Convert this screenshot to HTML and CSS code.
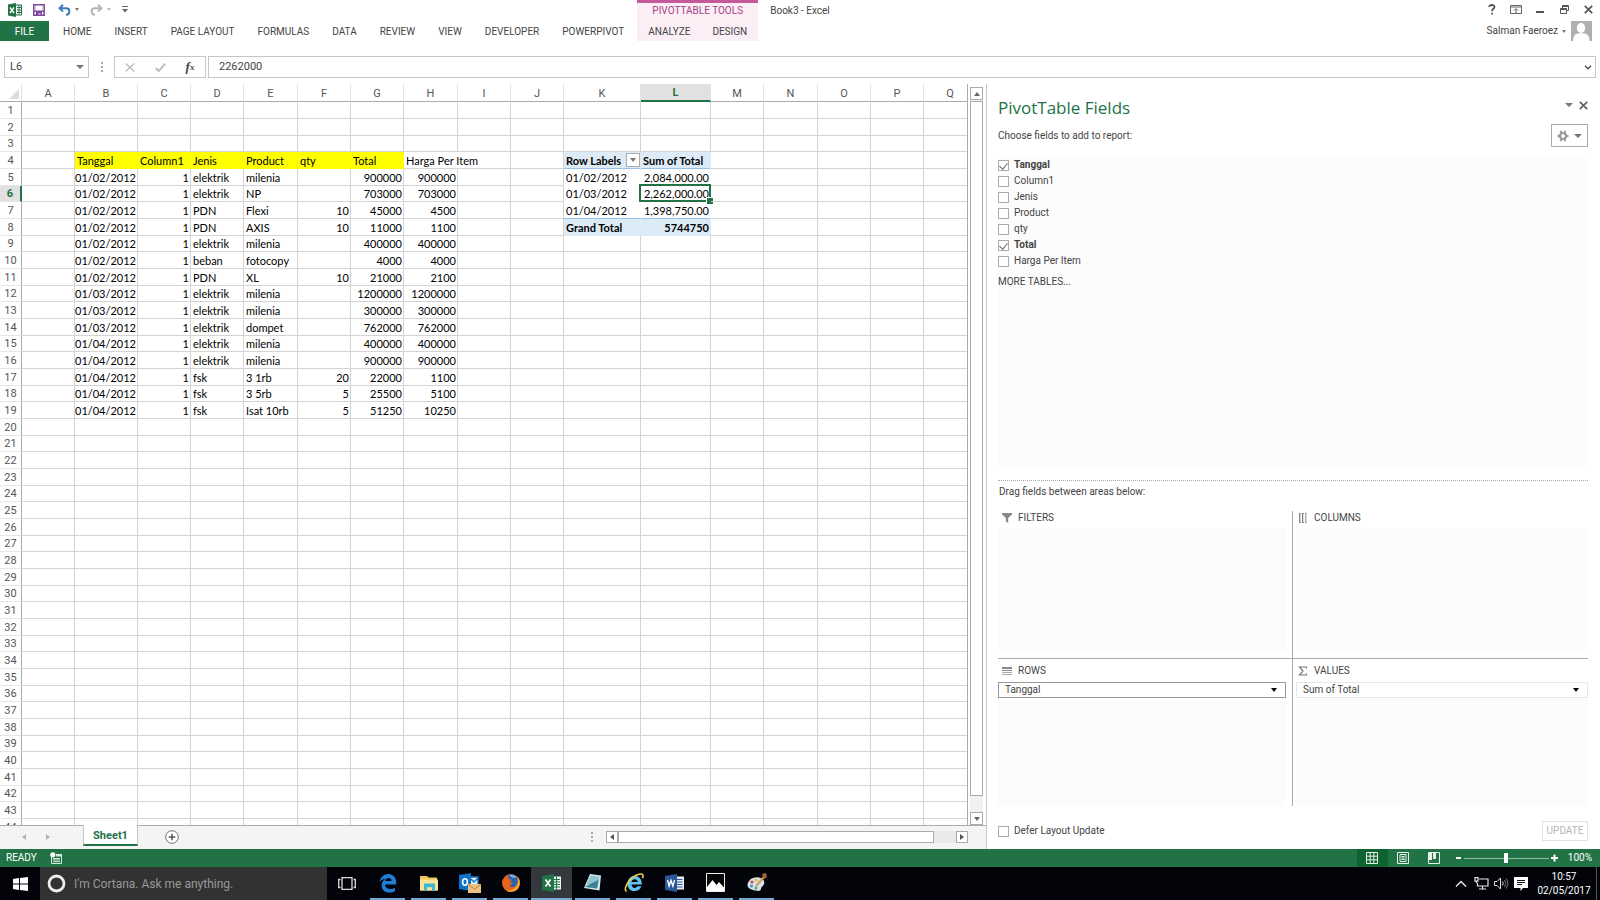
FILE: index.html
```html
<!DOCTYPE html>
<html lang="en">
<head>
<meta charset="utf-8">
<title>Book3 - Excel</title>
<link rel="stylesheet" href="styles.css">
</head>
<body>
<header class="ribbon">
  <div class="quick-access">
    <svg class="app-logo" width="14" height="14" viewBox="0 0 14 14"><path fill="#217346" d="M0 1.5 8 0v14L0 12.500z"/><path fill="none" stroke="#217346" d="M8 2h5.500v10H8M9 4.500h4M9 7h4M9 9.500h4M11 2v10"/><path stroke="#fff" stroke-width="1.400" d="m2 4.500 4 5.500M6 4.500l-4 5.500"/></svg>
    <button class="icon-btn save" aria-label="Save"><svg width="12" height="12" viewBox="0 0 12 12"><path fill="none" stroke="#80479c" stroke-width="1.500" d="M.8.8h10.400v10.400H.8z"/><path fill="#80479c" d="M1 6.500h10V8H1zM3 8h6v3.500H7.500V9.500h-2v2H3z"/><path fill="#80479c" opacity=".3" d="M2 1h1v5H2zM9 1h1v5H9z"/></svg></button>
    <button class="icon-btn" aria-label="Undo"><svg width="13" height="12" viewBox="0 0 13 12"><path fill="none" stroke="#3c78b4" stroke-width="1.900" d="M5 .8 1.500 4.200 5 7.600M1.500 4.200H8c4.500 0 4.500 6.300 0 6.600"/></svg></button>
    <button class="caret-btn" aria-label="Undo list"><i class="caret"></i></button>
    <button class="icon-btn" aria-label="Redo"><svg width="13" height="12" viewBox="0 0 13 12"><path fill="none" stroke="#b4b4b4" stroke-width="1.900" d="M8 .8l3.500 3.400L8 7.600M11.500 4.200H5c-4.500 0-4.500 6.300 0 6.600"/></svg></button>
    <button class="caret-btn" aria-label="Redo list"><i class="caret pale"></i></button>
    <button class="icon-btn" aria-label="Customize Quick Access Toolbar"><svg width="6" height="7" viewBox="0 0 6 7"><path fill="#666" d="M0 0h6v1H0zM0 3h6L3 6.500z"/></svg></button>
  </div>
  <nav class="tabs">
    <button class="file">FILE</button><button>HOME</button><button>INSERT</button><button>PAGE LAYOUT</button><button>FORMULAS</button><button>DATA</button><button>REVIEW</button><button>VIEW</button><button>DEVELOPER</button><button>POWERPIVOT</button>
  </nav>
  <div class="context-tabs">
    <span class="context-title">PIVOTTABLE TOOLS</span>
    <div class="context-row"><button>ANALYZE</button><button>DESIGN</button></div>
  </div>
  <h1 class="doc-title">Book3 - Excel</h1>
  <div class="window-controls">
    <button aria-label="Help"><svg width="8" height="11" viewBox="0 0 8 11"><path fill="none" stroke="#555" stroke-width="1.800" d="M1.200 3C1.200.3 6.500.3 6.500 3 6.500 4.800 4 4.800 4 7.200M4 8.700v1.800"/></svg></button>
    <button aria-label="Ribbon display options"><svg width="12" height="9" viewBox="0 0 12 9"><path fill="none" stroke="#666" d="M.5.5h11v8H.5zM.5 2h11M6 8V4M4 5.500l2-2 2 2"/></svg></button>
    <button aria-label="Minimize"><svg width="8" height="9" viewBox="0 0 8 9"><path fill="#555" d="M0 6h8v2H0z"/></svg></button>
    <button aria-label="Restore"><svg width="9" height="9" viewBox="0 0 9 9"><path fill="none" stroke="#555" d="M.5 3.500h6v5h-6zM.5 4.500h6M2.500 3V.5h6v5H7M2.500 1.500h6"/></svg></button>
    <button aria-label="Close"><svg width="9" height="9" viewBox="0 0 9 9"><path stroke="#555" stroke-width="1.700" d="m.8.8 7.400 7.400M8.200.8.800 8.200"/></svg></button>
  </div>
  <div class="account">
    <button>Salman Faeroez <i class="caret"></i></button>
    <svg width="21" height="20" viewBox="0 0 21 20"><path fill="#b0b0b0" d="M0 0h21v20H0z"/><ellipse cx="10" cy="7" rx="4.200" ry="5" fill="#fff"/><path fill="#fff" d="M2 20c0-5 2-7.500 6-7.800h4.500c4 .3 6 2.800 6 7.800z"/></svg>
  </div>
</header>

<section class="formula-bar">
  <div class="name-box"><input type="text" value="L6" aria-label="Name Box"><button class="caret-btn" aria-label="Name list"><i class="caret big"></i></button></div>
  <span class="grip"><i></i><i></i><i></i></span>
  <div class="formula-actions">
    <button aria-label="Cancel"><svg width="10" height="9" viewBox="0 0 10 9"><path stroke="#bdbdbd" stroke-width="1.400" d="m.7.5 8.600 8M9.300.5.7 8.500"/></svg></button>
    <button aria-label="Enter"><svg width="11" height="9" viewBox="0 0 11 9"><path fill="none" stroke="#bdbdbd" stroke-width="1.900" d="m.7 5 3 3L10.300.700"/></svg></button>
    <button class="fx" aria-label="Insert Function">f<small>x</small></button>
  </div>
  <div class="formula-box"><input type="text" value="2262000" aria-label="Formula"><button aria-label="Expand formula bar"><svg width="8" height="5" viewBox="0 0 8 5"><path fill="none" stroke="#555" stroke-width="1.600" d="M1 .7l3 3 3-3"/></svg></button></div>
</section>

<main class="workspace">
  <section class="book">
    <div class="grid-row">
      <div class="sheet"><table id="grid"></table></div>
      <div class="vscroll">
        <button aria-label="Scroll up"><i class="arrow up"></i></button>
        <div class="vtrack"><div class="vthumb"></div></div>
        <button aria-label="Scroll down"><i class="arrow down"></i></button>
      </div>
    </div>
    <div class="sheet-bar">
      <button class="nav" aria-label="Previous sheet"><i class="arrow left"></i></button>
      <button class="nav" aria-label="Next sheet"><i class="arrow right"></i></button>
      <button class="sheet-tab">Sheet1</button>
      <button class="add" aria-label="New sheet"><svg width="14" height="14" viewBox="0 0 14 14"><circle cx="7" cy="7" r="6.300" fill="#fff" stroke="#6e6e6e"/><path stroke="#555" stroke-width="1.500" d="M7 3.700v6.600M3.700 7h6.600"/></svg></button>
      <span class="grip push"><i></i><i></i><i></i></span>
      <div class="hscroll">
        <button aria-label="Scroll left"><i class="arrow left"></i></button>
        <div class="htrack"><div class="hthumb"></div></div>
        <button aria-label="Scroll right"><i class="arrow right"></i></button>
      </div>
    </div>
  </section>

  <aside class="pane">
    <div class="pane-head">
      <h2>PivotTable Fields</h2>
      <button aria-label="Pane options"><i class="caret big"></i></button>
      <button aria-label="Close pane"><svg width="9" height="9" viewBox="0 0 9 9"><path stroke="#666" stroke-width="1.800" d="m.8.8 7.400 7.400M8.200.8.800 8.200"/></svg></button>
    </div>
    <div class="pane-sub">
      <span>Choose fields to add to report:</span>
      <button class="tools" aria-label="Tools"><svg width="12" height="12" viewBox="0 0 12 12"><circle cx="6" cy="6" r="3" fill="none" stroke="#999" stroke-width="2.200"/><path stroke="#999" stroke-width="2" d="M3.800.7l.6 2M8.200.7l-.6 2M3.800 11.300l.6-2M8.200 11.300l-.6-2M.5 6h2M9.500 6h2"/></svg><i class="caret big"></i></button>
    </div>
    <div class="fields">
      <label class="on"><input type="checkbox" checked>Tanggal</label>
      <label><input type="checkbox">Column1</label>
      <label><input type="checkbox">Jenis</label>
      <label><input type="checkbox">Product</label>
      <label><input type="checkbox">qty</label>
      <label class="on"><input type="checkbox" checked>Total</label>
      <label><input type="checkbox">Harga Per Item</label>
      <a href="#more">MORE TABLES...</a>
    </div>
    <p class="drag-hint">Drag fields between areas below:</p>
    <div class="areas">
      <section>
        <h3><svg width="10" height="10" viewBox="0 0 10 10"><path fill="#888" d="M0 0h10v1.500L6.200 5v5L3.800 8.500V5L0 1.500z"/></svg>FILTERS</h3>
        <div class="drop"></div>
      </section>
      <section>
        <h3><svg width="10" height="10" viewBox="0 0 10 10"><path fill="#888" d="M1 0h2v10H1zM4 0h2v10H4z"/><path fill="#aaa" d="M7 0h2v10H7z"/><path fill="#ddd" d="M2 1h1v8H2zM5 1h1v8H5zM8 1h1v8H8z"/></svg>COLUMNS</h3>
        <div class="drop"></div>
      </section>
      <section>
        <h3><svg width="10" height="10" viewBox="0 0 10 10"><path fill="#888" d="M0 1h10v2H0zM0 4h10v1H0z"/><path fill="#aaa" d="M0 6h10v1H0zM0 8h10v1H0z"/></svg>ROWS</h3>
        <div class="drop"><button class="pill strong">Tanggal<i class="caret black"></i></button></div>
      </section>
      <section>
        <h3><svg width="10" height="10" viewBox="0 0 10 10"><path fill="none" stroke="#777" stroke-width="1.200" d="M8.500 2.500V1h-7L5 5 1.500 9h7V7.500"/></svg>VALUES</h3>
        <div class="drop"><button class="pill">Sum of Total<i class="caret black"></i></button></div>
      </section>
    </div>
    <div class="pane-foot">
      <label><input type="checkbox">Defer Layout Update</label>
      <button disabled>UPDATE</button>
    </div>
  </aside>
</main>

<footer class="status">
  <span>READY</span>
  <button class="macro" aria-label="Record macro"><svg width="12" height="12" viewBox="0 0 12 12"><path fill="none" stroke="#d5e8dc" d="M1.500 5v6.500h10v-9H6M3 6.500h7M3 8h7M3 9.700h7"/><circle cx="2.800" cy="2.800" r="2.600" fill="#fff"/><path fill="#d5e8dc" d="M6 2h6v2.500H6z"/></svg></button>
  <button class="view on" aria-label="Normal view"><svg width="12" height="12" viewBox="0 0 12 12"><path fill="none" stroke="#e6f1ea" d="M.5.5h11v11H.5zM4.200.5v11M7.800.5v11M.5 4.200h11M.5 7.800h11"/></svg></button>
  <button class="view" aria-label="Page layout view"><svg width="12" height="12" viewBox="0 0 12 12"><path fill="none" stroke="#e6f1ea" d="M.5.5h11v11H.5zM3 2.500h6v7H3zM4.500 4.500h3M4.500 6h3M4.500 7.500h3"/></svg></button>
  <button class="view" aria-label="Page break view"><svg width="12" height="12" viewBox="0 0 12 12"><path fill="none" stroke="#e6f1ea" d="M.5.5h11v11H.5z"/><path fill="#e6f1ea" d="M1 1h3v7H1zM5 1h3v6H5z"/></svg></button>
  <button class="zoom-step" aria-label="Zoom out"><svg width="7" height="8" viewBox="0 0 7 8"><path fill="#fff" d="M1 3h5v2H1z"/></svg></button>
  <input class="zoom" type="range" min="0" max="100" value="50" aria-label="Zoom">
  <button class="zoom-step" aria-label="Zoom in"><svg width="7" height="8" viewBox="0 0 7 8"><path fill="#fff" d="M0 3h7v2H0zM2.500.5h2v7h-2z"/></svg></button>
  <span class="zoom-value">100%</span>
</footer>

<footer class="taskbar">
  <button class="start" aria-label="Start"><svg width="15" height="14" viewBox="0 0 15 14"><path fill="#fff" d="M0 2l6-.9v5.500H0zM7 1l8-1v6.600H7zM0 7.500h6V13l-6-.9zM7 7.500h8V14l-8-1z"/></svg></button>
  <label class="cortana"><svg width="19" height="19" viewBox="0 0 19 19"><circle cx="9.500" cy="9.500" r="7.500" fill="none" stroke="#eee" stroke-width="2.800"/></svg><input type="text" placeholder="I'm Cortana. Ask me anything." aria-label="Search"></label>
  <button class="task-view" aria-label="Task view"><svg width="18" height="13" viewBox="0 0 18 13"><path fill="none" stroke="#ddd" stroke-width="1.300" d="M4 .7h10v11.600H4zM2.500 2.500H.7v8h1.800M15.500 2.500h1.800v8h-1.800"/></svg></button>
  <div class="apps">
    <button aria-label="Edge"><svg width="20" height="20" viewBox="0 0 20 20"><path fill="#1e7fd6" d="M1.500 9C2.500 4 6 1 10.300 1c5 0 8 3.700 7.900 8.500v2H7c.3 5 6.500 5.500 10 3.200v3.500c-5.500 3-13.300 1.300-13.300-5.700 0-3 1.500-5.200 3.800-6.400C4.800 6 3 7.300 1.500 9zm5.700-.9h6.400c0-4-5.700-4.200-6.400 0z"/></svg></button>
    <button aria-label="File Explorer"><svg width="20" height="20" viewBox="0 0 20 20"><path fill="#f0c858" d="M1 3h7l1.500 1.500H18v13H1z"/><path fill="#fbe49a" d="M1 6.500h18v11H1z"/><path fill="#3cb7d6" d="M5 10.500h11v7h-3v-3.200H8v3.200H5z"/></svg></button>
    <button aria-label="Outlook"><svg width="22" height="22" viewBox="0 0 22 22"><path fill="#e8f1fa" d="M11 5h8v10h-8z"/><path fill="none" stroke="#0f72c6" stroke-width="1.400" d="M11 5h8v9h-8M12 7l3 3 4-4"/><path fill="#0f72c6" d="M0 3l12-2v18L0 17z"/><ellipse cx="6" cy="10" rx="2.400" ry="3.200" fill="none" stroke="#fff" stroke-width="1.600"/><path fill="#eec084" d="M9 12h13v9H9z"/><path fill="none" stroke="#b98545" d="m9 12.500 6.500 4.500 6.500-4.500"/></svg></button>
    <button aria-label="Firefox"><svg width="20" height="20" viewBox="0 0 20 20"><circle cx="10" cy="10" r="9" fill="#e8641c"/><path fill="#f5a72a" d="M16.500 3.500c4 5 2.500 12-2.500 14.500-3 1.300-7 1-9-.5 5 .5 9-1 10.500-5 1-3 1-6 1-9z"/><path fill="#2b62b0" d="M6.500 3C9 .5 14 1 16 4.500c1.500 3 1 7.500-2 9-2 1-4.500.5-6-1 2 0 2.500-1.500 4-2-.5-1-2-.8-3-1.500 0-1 1.500-1.200 1.500-2-1-.8-2.500-.5-3-1.500 0-.7.300-1.500-1-2.500z"/><path fill="#6fb0e4" d="M8 2.500c3-1.500 6-.5 7.500 2l-3.500.5z"/></svg></button>
    <button class="active" aria-label="Excel"><svg width="20" height="18" viewBox="0 0 20 18"><path fill="#e8f3ec" d="M10 2.500h9v13h-9z"/><path fill="none" stroke="#217346" d="M10 5.500h8M10 8h8M10 10.500h8M10 13h8M14.500 3v12"/><path fill="#217346" d="M0 2l12-2v18L0 16z"/><path stroke="#fff" stroke-width="1.700" d="m3.500 5.500 5 7M8.500 5.500l-5 7"/></svg></button>
    <button aria-label="Notepad"><svg width="20" height="20" viewBox="0 0 20 20"><path fill="#d8e8ea" d="M7 1l11 1.500-1.500 15L1 15z"/><path fill="#8fc3cd" d="M7.500 2.500l9 1.200-2 11.800L2.500 14z"/><path fill="#3b8095" d="M9 10l6.500-3-1.500 8.500L2.500 14z"/></svg></button>
    <button aria-label="Internet Explorer"><svg width="20" height="20" viewBox="0 0 20 20"><path fill="#5fc4ef" d="M10.500 3C15 3 18 6 17.800 11.500H7.500c.3 4 4.500 4.300 5.800 1.700h4.200C14.500 20.500 3.500 19.500 3.500 11 3.500 6 6.500 3 10.500 3zm-3 6h6.300c-.3-3.800-5.800-3.800-6.300 0z"/><path fill="none" stroke="#f2cf48" stroke-width="1.600" d="M2.500 18.500C-1 16 5 4 15 1.300c4.500-1 4.500 1.500 3.500 4"/></svg></button>
    <button aria-label="Word"><svg width="20" height="18" viewBox="0 0 20 18"><path fill="#e9eff8" d="M10 2.500h9v13h-9z"/><path stroke="#2b579a" d="M11 5.500h6.500M11 8h6.500M11 10.500h6.500M11 13h6.500"/><path fill="#2b579a" d="M0 2l12-2v18L0 16z"/><path fill="none" stroke="#fff" stroke-width="1.400" d="m2.500 6 1.600 6L6 6.500 7.900 12l1.600-6"/></svg></button>
    <button aria-label="Photos"><svg width="19" height="19" viewBox="0 0 19 19"><path fill="#050505" stroke="#eee" d="M.5.5h18v18H.5z"/><path fill="#fff" d="M1 14l5.500-7 4 5 2.500-3 5 5.500V18H1z"/></svg></button>
    <button aria-label="Paint"><svg width="20" height="20" viewBox="0 0 20 20"><path fill="#d6e3ea" d="M2 8c3-5 13-5 15 0 1.500 5-3 5-3 7.500C14 19 9 18 6 17-1 15 0 11 2 8z"/><circle cx="5" cy="9" r="1.600" fill="#d84f3f"/><circle cx="9" cy="7" r="1.500" fill="#e8b93a"/><circle cx="4.500" cy="13" r="1.500" fill="#3d8fd1"/><circle cx="9" cy="15" r="1.500" fill="#58a84e"/><path stroke="#d39a5c" stroke-width="2" d="m9 13 8-9"/><path fill="#a8643a" d="M15 1l4-1 1 4-3 2z"/></svg></button>
  </div>
  <div class="tray">
    <button aria-label="Show hidden icons"><svg width="12" height="8" viewBox="0 0 12 8"><path fill="none" stroke="#e5e5e5" stroke-width="1.500" d="m1 6.500 5-5 5 5"/></svg></button>
    <button aria-label="Network"><svg width="15" height="13" viewBox="0 0 15 13"><path fill="none" stroke="#e5e5e5" stroke-width="1.200" d="M5 2h9v7H3.500V6M8.500 9v3M5 12h7M1 .6h3v3.500H1zM2.500 4v2"/></svg></button>
    <button aria-label="Volume"><svg width="15" height="13" viewBox="0 0 15 13"><path fill="none" stroke="#e5e5e5" d="M.5 4.500H3L6.500 1v11L3 8.500H.5zM8.500 4.500q1.500 2 0 4"/><path fill="none" stroke="#777" d="M10.500 3q2.500 3.500 0 7M12.500 1.500q3 5 0 10"/></svg></button>
    <button aria-label="Notifications"><svg width="14" height="14" viewBox="0 0 14 14"><path fill="#fff" d="M0 0h14v11H9l-2.500 3V11H0z"/><path stroke="#111" d="M3 3.500h8M3 5.500h8M3 7.500h5"/></svg></button>
    <button class="clock"><span>10:57</span><span>02/05/2017</span></button>
    <span class="peek"></span>
  </div>
</footer>
<script src="sheet.js"></script>
</body>
</html>
```
FILE: styles.css
```css
* { box-sizing: border-box; }

body {
  margin: 0;
  height: 100vh;
  display: flex;
  flex-direction: column;
  overflow: hidden;
  background: #fff;
  color: #444;
  font: 10px/14px Roboto, "Liberation Sans", sans-serif;
}

button, input {
  margin: 0;
  padding: 0;
  border: 0;
  background: none;
  color: inherit;
  font: inherit;
}
button { display: flex; align-items: center; justify-content: center; }
input[type="text"] { min-width: 0; outline: 0; }
svg { display: block; flex: none; }
h1, h2, h3, p { margin: 0; font-weight: 400; }

/* Small triangles */
.caret {
  flex: none;
  width: 0;
  border: 2px solid transparent;
  border-top: 3px solid #777;
  border-bottom: 0;
}
.caret.pale { border-top-color: #bbb; }
.caret.big { border-width: 4px 4px 0; }
.caret.black { border-width: 4px 3px 0; border-top-color: #000; }
.arrow { width: 0; border: 3px solid transparent; }
.arrow.up { border-top: 0; border-bottom: 4px solid #666; }
.arrow.down { border-bottom: 0; border-top: 4px solid #666; }
.arrow.left { border-left: 0; border-right: 4px solid #555; }
.arrow.right { border-right: 0; border-left: 4px solid #555; }

/* Ribbon */
.ribbon {
  display: grid;
  grid-template: 21px 20px / auto auto 1fr auto;
  margin-bottom: 15px;
}
.quick-access {
  grid-area: 1 / 1;
  display: flex;
  align-items: center;
  padding: 0 8px 2px;
}
.save { margin: 0 13px 0 11px; }
.caret-btn { width: 12px; }
.quick-access .caret-btn { margin-right: 7px; }
.tabs { grid-area: 2 / 1; display: flex; gap: 1px; margin-right: 2px; }
.tabs button { padding: 2px 11px 0; }
.tabs .file { width: 49px; margin-right: 2px; background: #217346; color: #fff; }
.context-tabs {
  grid-area: 1 / 2 / 3 / 3;
  display: grid;
  grid-template-rows: 18px 20px;
  border-top: 3px solid #c55a9b;
  background: #fbeef5;
}
.context-title { justify-self: center; line-height: 16px; color: #a8428a; }
.context-row { display: flex; }
.context-row button { padding: 2px 11px 0; }
.doc-title { grid-area: 1 / 3; padding-left: 12px; font-size: 10px; line-height: 22px; }
.window-controls { grid-area: 1 / 4; display: flex; justify-content: flex-end; }
.window-controls button { width: 24px; padding-bottom: 2px; }
.account {
  grid-area: 2 / 4;
  display: flex;
  justify-content: flex-end;
  gap: 5px;
  padding-right: 8px;
}
.account button { gap: 4px; }

/* Formula bar */
.formula-bar {
  display: flex;
  height: 22px;
  padding: 0 4px;
  margin-bottom: 6px;
  font-size: 11px;
}
.formula-bar > div { display: flex; border: 1px solid #c6c6c6; }
.name-box { width: 85px; }
.name-box input { flex: 1; padding-left: 5px; }
.name-box .caret-btn { width: 16px; }
.grip {
  display: flex;
  flex-direction: column;
  align-items: center;
  justify-content: center;
  gap: 2px;
  width: 25px;
}
.grip i { width: 2px; height: 2px; background: #aaa; }
.formula-actions { width: 92px; margin-right: 2px; }
.formula-actions button { flex: 1; }
.formula-actions .fx { font: italic bold 13px "Liberation Serif", serif; }
.fx small { font-size: 9px; }
.formula-box { flex: 1; }
.formula-box input { flex: 1; padding-left: 10px; }
.formula-box button { width: 14px; }

/* Workspace */
.workspace { flex: 1; display: flex; min-height: 0; }
.book { flex: 1; display: flex; flex-direction: column; min-width: 0; background: #fff; }
.grid-row { flex: 1; display: flex; min-height: 0; }
.sheet { flex: 1; overflow: hidden; border-right: 1px solid #ababab; }

#grid {
  width: 977px;
  table-layout: fixed;
  border-spacing: 0;
  color: #000;
  font: 11px/15px Lato, "Liberation Sans", sans-serif;
}
#grid th, #grid td { padding: 0 2px; white-space: nowrap; text-align: left; }
#grid td { position: relative; border-right: 1px solid #d4d4d4; border-bottom: 1px solid #d4d4d4; }
#grid tr { height: 17px; }
#grid tbody tr:nth-child(3n) { height: 16px; }
#grid th {
  padding: 0;
  color: #555;
  font: 11px/15px Roboto, sans-serif;
  text-align: center;
}
#grid thead th { height: 18px; padding-top: 2px; border-bottom: 1px solid #ababab; border-right: 1px solid #e2e2e2; }
#grid tbody th { border-right: 1px solid #ababab; border-bottom: 1px solid #e6e6e6; }
#grid thead th.sel { background: #e1e1e1; border-bottom: 2px solid #217346; color: #217346; font-weight: 700; line-height: 14px; }
#grid tbody th.sel { background: #e1e1e1; border-right: 2px solid #217346; color: #217346; font-weight: 700; }
.corner i {
  display: block;
  width: 0;
  margin-left: 9px;
  border-left: 10px solid transparent;
  border-bottom: 10px solid #dcdcdc;
}
#grid td.num { padding: 0 1px 0 0; text-align: right; }
#grid td.yellow { background: #ff0; border-color: #ff0; }
#grid td.spill { border-right-color: transparent; }
#grid td.pivot { border-color: transparent; }
#grid td.band { background: #ddebf7; border-color: #ddebf7; font-weight: 700; }
#grid td.head, #grid td.pre-total { border-bottom-color: #9bc2e6; }
.current::before {
  content: "";
  position: absolute;
  inset: -2px -1px -1px -2px;
  border: 2px solid #217346;
}
.current::after {
  content: "";
  position: absolute;
  right: -3px;
  bottom: -3px;
  width: 6px;
  height: 6px;
  border: 1px solid #fff;
  border-width: 1px 0 0 1px;
  background: #217346;
}
.filter {
  position: absolute;
  top: 1px;
  right: 0;
  width: 14px;
  height: 14px;
  border: 1px solid #ababab;
  background: #fff;
}
.filter .caret { border-width: 4px 3px 0; }

/* Scroll bars */
.vscroll { width: 18px; padding: 3px 3px 0 2px; display: flex; flex-direction: column; }
.vscroll button { height: 13px; border: 1px solid #ababab; background: #fff; }
.vtrack { flex: 1; padding: 1px 0 16px; background: #f1f1f1; }
.vthumb { height: 100%; border: 1px solid #ababab; background: #fff; }
.sheet-bar {
  display: flex;
  height: 24px;
  padding-left: 12px;
  background: #f4f4f4;
  border-top: 1px solid #ababab;
}
.sheet-bar .nav { width: 24px; height: 21px; opacity: .4; }
.sheet-tab {
  width: 55px;
  height: 21px;
  padding-top: 3px;
  margin: -1px 27px 0 23px;
  border: 1px solid #c6c6c6;
  border-width: 0 1px 2px;
  border-bottom-color: #217346;
  background: #fff;
  color: #217346;
  font: 700 11px/14px Roboto, sans-serif;
}
.add { height: 21px; }
.push { margin-left: auto; height: 21px; width: 8px; }
.hscroll { display: flex; width: 362px; height: 12px; margin: 5px 18px 0 10px; }
.hscroll button { width: 12px; border: 1px solid #ababab; background: #fff; }
.htrack { flex: 1; padding-right: 22px; background: #e9e9e9; }
.hthumb { height: 100%; border: 1px solid #ababab; background: #fff; }

/* Field pane */
.pane {
  flex: none;
  width: 614px;
  display: flex;
  flex-direction: column;
  padding: 12px 12px 8px 11px;
  border-left: 1px solid #c6c6c6;
}
.pane-head { display: flex; align-items: flex-start; }
.pane-head h2 {
  flex: 1;
  color: #217346;
  font: 400 17px/24px "Open Sans", "Noto Sans", sans-serif;
}
.pane-head button { height: 18px; margin-left: 6px; }
.pane-sub { display: flex; justify-content: space-between; align-items: center; margin: 4px 0 10px; }
.tools { width: 37px; height: 23px; gap: 5px; border: 1px solid #ababab; }
.fields {
  flex: none;
  display: flex;
  flex-direction: column;
  height: 310px;
  background: #fcfcfc;
}
.pane label { display: flex; align-items: center; gap: 5px; height: 16px; }
.fields .on { font-weight: 700; }
.pane input[type="checkbox"] {
  appearance: none;
  width: 11px;
  height: 11px;
  border: 1px solid #ababab;
  background: #fff;
}
.pane input:checked { display: grid; place-items: center; }
.pane input:checked::before {
  content: "";
  width: 4px;
  height: 7px;
  margin-bottom: 2px;
  border: solid #666;
  border-width: 0 1px 1px 0;
  transform: rotate(40deg);
}
.fields a { margin-top: 6px; color: #444; text-decoration: none; }
.drag-hint { margin-top: 13px; padding: 4px 1px 12px; border-top: 1px dotted #aaa; }
.areas {
  flex: 1;
  display: grid;
  grid-template: 148px 1fr / 295px 1fr;
}
.areas section { display: flex; flex-direction: column; min-width: 0; }
.areas section:nth-child(odd) { border-right: 1px solid #ababab; }
.areas section:nth-child(odd) .drop { margin-right: 6px; }
.areas section:nth-child(even) .drop { margin-left: 3px; }
.areas section:nth-child(-n+2) { padding-bottom: 6px; border-bottom: 1px solid #ababab; }
.areas h3 { display: flex; align-items: center; gap: 6px; padding-left: 4px; font-size: 10px; }
.areas section:nth-child(-n+2) h3 { height: 17px; padding-bottom: 3px; }
.areas section:nth-child(n+3) h3 { height: 23px; }
.areas section:nth-child(even) h3 { padding-left: 5px; }
.drop { flex: 1; background: #fcfcfc; }
.pill {
  width: 100%;
  height: 16px;
  justify-content: space-between;
  padding: 0 8px 0 6px;
  border: 1px solid #dfecea;
  background: #fff;
}
.pill.strong { border-color: #999; }
.pane-foot { display: flex; justify-content: space-between; align-items: center; margin-top: 15px; }
.pane-foot button { width: 46px; height: 20px; border: 1px solid #e1e1e1; color: #b5b5b5; }

/* Status bar */
.status {
  display: flex;
  align-items: center;
  height: 18px;
  padding: 0 8px 0 6px;
  background: #217346;
  color: #fff;
}
.macro { margin: 0 auto 0 13px; }
.view { width: 31px; height: 18px; }
.view.on { background: #0f6331; }
.zoom-step { margin: 0 2px; }
.status .view + .zoom-step { margin-left: 5px; }
.zoom { appearance: none; width: 85px; height: 10px; }
.zoom::-webkit-slider-runnable-track { height: 10px; background: linear-gradient(#8fbda0, #8fbda0) center / 100% 1px no-repeat; }
.zoom::-webkit-slider-thumb { appearance: none; width: 4px; height: 10px; background: #fff; }
.zoom-value { margin-left: 8px; }

/* Taskbar */
.taskbar { display: flex; height: 33px; background: #02040a; color: #fff; }
.start { width: 40px; }
.cortana {
  display: flex;
  align-items: center;
  gap: 8px;
  width: 287px;
  padding-left: 7px;
  background: #323232;
}
.cortana input { flex: 1; font-size: 12px; }
.cortana input::placeholder { color: #999; opacity: 1; }
.task-view { width: 40px; }
.apps { display: flex; }
.apps button {
  width: 35px;
  margin: 0 3px;
  border-bottom: 2px solid #76a9d8;
}
.apps .active { width: 41px; margin: 0; background: #33383d; }
.tray { display: flex; margin-left: auto; }
.tray button { width: 20px; }
.tray .clock { flex-direction: column; width: 60px; margin-left: 3px; }
.peek { width: 4px; margin-left: 2px; border-left: 1px solid #555; }
```
FILE: sheet.js
```js
const widths = [22, 53, 63, 53, 53, 54, 53, 53, 54, 53, 53, 77, 70, 53, 54, 53, 53, 53];
const letters = "ABCDEFGHIJKLMNOPQ";
const cells = {};

function put(ref, text, cls = "") {
  cells[ref] = { text, cls };
}

["Tanggal", "Column1", "Jenis", "Product", "qty", "Total"].forEach((t, i) => put("BCDEFG"[i] + 4, t, "yellow"));
put("H4", "Harga Per Item", "spill");

[
  ["01/02/2012", "elektrik", "milenia", "", 900000, 900000],
  ["01/02/2012", "elektrik", "NP", "", 703000, 703000],
  ["01/02/2012", "PDN", "Flexi", 10, 45000, 4500],
  ["01/02/2012", "PDN", "AXIS", 10, 11000, 1100],
  ["01/02/2012", "elektrik", "milenia", "", 400000, 400000],
  ["01/02/2012", "beban", "fotocopy", "", 4000, 4000],
  ["01/02/2012", "PDN", "XL", 10, 21000, 2100],
  ["01/03/2012", "elektrik", "milenia", "", 1200000, 1200000],
  ["01/03/2012", "elektrik", "milenia", "", 300000, 300000],
  ["01/03/2012", "elektrik", "dompet", "", 762000, 762000],
  ["01/04/2012", "elektrik", "milenia", "", 400000, 400000],
  ["01/04/2012", "elektrik", "milenia", "", 900000, 900000],
  ["01/04/2012", "fsk", "3 1rb", 20, 22000, 1100],
  ["01/04/2012", "fsk", "3 5rb", 5, 25500, 5100],
  ["01/04/2012", "fsk", "Isat 10rb", 5, 51250, 10250],
].forEach(([date, kind, product, qty, total, price], i) => {
  const r = i + 5;
  put("B" + r, date, "num");
  put("C" + r, 1, "num");
  put("D" + r, kind);
  put("E" + r, product);
  put("F" + r, qty, "num");
  put("G" + r, total, "num");
  put("H" + r, price, "num");
});

put("K4", 'Row Labels<button class="filter" aria-label="Filter rows"><i class="caret"></i></button>', "band head");
put("L4", "Sum of Total", "band head");
put("K5", "01/02/2012", "pivot");
put("L5", "2,084,000.00", "pivot num");
put("K6", "01/03/2012", "pivot");
put("L6", "2,262,000.00", "pivot num current");
put("K7", "01/04/2012", "pivot pre-total");
put("L7", "1,398,750.00", "pivot num pre-total");
put("K8", "Grand Total", "band");
put("L8", "5744750", "band num");

let html = "<colgroup>" + widths.map(w => `<col style="width:${w}px">`).join("") + "</colgroup>";
html += '<thead><tr><th class="corner"><i></i></th>';
for (const c of letters) html += `<th scope="col"${c === "L" ? ' class="sel"' : ""}>${c}</th>`;
html += "</tr></thead><tbody>";
for (let r = 1; r <= 44; r++) {
  html += `<tr><th scope="row"${r === 6 ? ' class="sel"' : ""}>${r}</th>`;
  for (const c of letters) {
    const cell = cells[c + r] || { text: "", cls: "" };
    html += `<td class="${cell.cls}">${cell.text}</td>`;
  }
  html += "</tr>";
}
document.getElementById("grid").innerHTML = html + "</tbody>";
```
